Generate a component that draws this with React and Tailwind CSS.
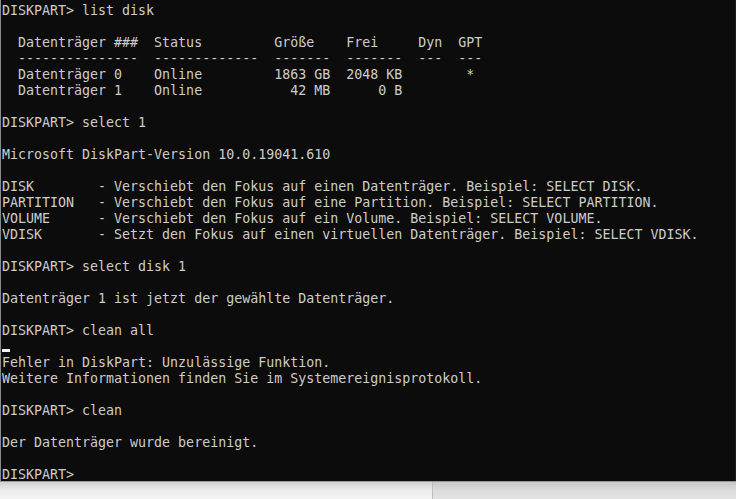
import React from "react";

const LINES = [
  "DISKPART> list disk",
  "",
  "  Datenträger ###  Status         Größe    Frei     Dyn  GPT",
  "  ---------------  -------------  -------  -------  ---  ---",
  "  Datenträger 0    Online         1863 GB  2048 KB        *",
  "  Datenträger 1    Online           42 MB      0 B",
  "",
  "DISKPART> select 1",
  "",
  "Microsoft DiskPart-Version 10.0.19041.610",
  "",
  "DISK        - Verschiebt den Fokus auf einen Datenträger. Beispiel: SELECT DISK.",
  "PARTITION   - Verschiebt den Fokus auf eine Partition. Beispiel: SELECT PARTITION.",
  "VOLUME      - Verschiebt den Fokus auf ein Volume. Beispiel: SELECT VOLUME.",
  "VDISK       - Setzt den Fokus auf einen virtuellen Datenträger. Beispiel: SELECT VDISK.",
  "",
  "DISKPART> select disk 1",
  "",
  "Datenträger 1 ist jetzt der gewählte Datenträger.",
  "",
  "DISKPART> clean all",
  null, // cursor row
  "Fehler in DiskPart: Unzulässige Funktion.",
  "Weitere Informationen finden Sie im Systemereignisprotokoll.",
  "",
  "DISKPART> clean",
  "",
  "Der Datenträger wurde bereinigt.",
  "",
  "DISKPART>",
];

const Console = () => (
  <div className="flex-1 bg-[#0c0c0c] overflow-hidden pl-[1px] pt-[3px] text-[#cccccc] text-[13.3px] leading-[16px] font-['DejaVu_Sans_Mono',monospace]">
    {LINES.map((line, i) =>
      line === null ? (
        <div key={i} className="h-[16px] flex items-end">
          <div className="w-[8px] h-[3px] mb-[3px] bg-[#f2f2f2]" />
        </div>
      ) : (
        <div key={i} className="h-[16px] whitespace-pre">
          {line}
        </div>
      )
    )}
  </div>
);

export default function App() {
  return (
    <div className="w-[736px] h-[499px] flex flex-col bg-[#f0f0f0] overflow-hidden">
      <div className="h-[481px] flex">
        <div className="w-[1px] bg-[#8a8a8a]" />
        <Console />
        <div className="w-[1px] bg-[#1c1c1c]" />
      </div>
      <div className="flex-1 flex border-t border-[#9a9a9a]">
        <div className="w-[432px] bg-gradient-to-b from-[#d2d2d2] via-[#ececec] to-[#f4f4f4]" />
        <div className="w-[1px] bg-[#bdbdbd]" />
        <div className="flex-1 bg-gradient-to-b from-[#c8c8c8] via-[#dcdcdc] to-[#e2e2e2]" />
      </div>
    </div>
  );
}
